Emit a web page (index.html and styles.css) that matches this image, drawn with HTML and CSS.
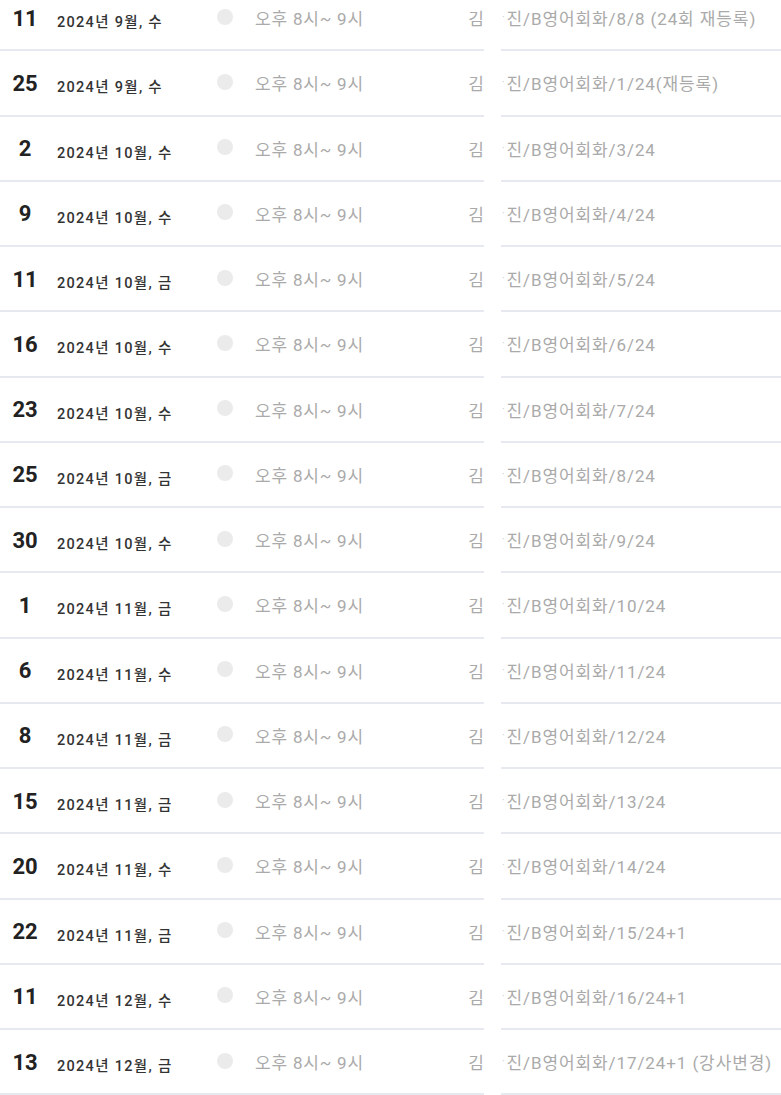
FILE: index.html
```html
<!DOCTYPE html>
<html lang="ko">
<head>
<meta charset="utf-8">
<link rel="stylesheet" href="styles.css">
</head>
<body>
<ul class="list">
  <li class="row"><div class="left"><span class="day">11</span><span class="date">2024년 9월, 수</span><span class="dot"></span><span class="time">오후 8시~ 9시</span><span class="name">김</span></div><div class="right"><span class="mid">·</span>진/B영어회화/8/8 (24회 재등록)</div></li>
  <li class="row"><div class="left"><span class="day">25</span><span class="date">2024년 9월, 수</span><span class="dot"></span><span class="time">오후 8시~ 9시</span><span class="name">김</span></div><div class="right"><span class="mid">·</span>진/B영어회화/1/24(재등록)</div></li>
  <li class="row"><div class="left"><span class="day">2</span><span class="date">2024년 10월, 수</span><span class="dot"></span><span class="time">오후 8시~ 9시</span><span class="name">김</span></div><div class="right"><span class="mid">·</span>진/B영어회화/3/24</div></li>
  <li class="row"><div class="left"><span class="day">9</span><span class="date">2024년 10월, 수</span><span class="dot"></span><span class="time">오후 8시~ 9시</span><span class="name">김</span></div><div class="right"><span class="mid">·</span>진/B영어회화/4/24</div></li>
  <li class="row"><div class="left"><span class="day">11</span><span class="date">2024년 10월, 금</span><span class="dot"></span><span class="time">오후 8시~ 9시</span><span class="name">김</span></div><div class="right"><span class="mid">·</span>진/B영어회화/5/24</div></li>
  <li class="row"><div class="left"><span class="day">16</span><span class="date">2024년 10월, 수</span><span class="dot"></span><span class="time">오후 8시~ 9시</span><span class="name">김</span></div><div class="right"><span class="mid">·</span>진/B영어회화/6/24</div></li>
  <li class="row"><div class="left"><span class="day">23</span><span class="date">2024년 10월, 수</span><span class="dot"></span><span class="time">오후 8시~ 9시</span><span class="name">김</span></div><div class="right"><span class="mid">·</span>진/B영어회화/7/24</div></li>
  <li class="row"><div class="left"><span class="day">25</span><span class="date">2024년 10월, 금</span><span class="dot"></span><span class="time">오후 8시~ 9시</span><span class="name">김</span></div><div class="right"><span class="mid">·</span>진/B영어회화/8/24</div></li>
  <li class="row"><div class="left"><span class="day">30</span><span class="date">2024년 10월, 수</span><span class="dot"></span><span class="time">오후 8시~ 9시</span><span class="name">김</span></div><div class="right"><span class="mid">·</span>진/B영어회화/9/24</div></li>
  <li class="row"><div class="left"><span class="day">1</span><span class="date">2024년 11월, 금</span><span class="dot"></span><span class="time">오후 8시~ 9시</span><span class="name">김</span></div><div class="right"><span class="mid">·</span>진/B영어회화/10/24</div></li>
  <li class="row"><div class="left"><span class="day">6</span><span class="date">2024년 11월, 수</span><span class="dot"></span><span class="time">오후 8시~ 9시</span><span class="name">김</span></div><div class="right"><span class="mid">·</span>진/B영어회화/11/24</div></li>
  <li class="row"><div class="left"><span class="day">8</span><span class="date">2024년 11월, 금</span><span class="dot"></span><span class="time">오후 8시~ 9시</span><span class="name">김</span></div><div class="right"><span class="mid">·</span>진/B영어회화/12/24</div></li>
  <li class="row"><div class="left"><span class="day">15</span><span class="date">2024년 11월, 금</span><span class="dot"></span><span class="time">오후 8시~ 9시</span><span class="name">김</span></div><div class="right"><span class="mid">·</span>진/B영어회화/13/24</div></li>
  <li class="row"><div class="left"><span class="day">20</span><span class="date">2024년 11월, 수</span><span class="dot"></span><span class="time">오후 8시~ 9시</span><span class="name">김</span></div><div class="right"><span class="mid">·</span>진/B영어회화/14/24</div></li>
  <li class="row"><div class="left"><span class="day">22</span><span class="date">2024년 11월, 금</span><span class="dot"></span><span class="time">오후 8시~ 9시</span><span class="name">김</span></div><div class="right"><span class="mid">·</span>진/B영어회화/15/24+1</div></li>
  <li class="row"><div class="left"><span class="day">11</span><span class="date">2024년 12월, 수</span><span class="dot"></span><span class="time">오후 8시~ 9시</span><span class="name">김</span></div><div class="right"><span class="mid">·</span>진/B영어회화/16/24+1</div></li>
  <li class="row"><div class="left"><span class="day">13</span><span class="date">2024년 12월, 금</span><span class="dot"></span><span class="time">오후 8시~ 9시</span><span class="name">김</span></div><div class="right"><span class="mid">·</span>진/B영어회화/17/24+1 (강사변경)</div></li>
</ul>
</body>
</html>
```
FILE: styles.css
```css
html, body {
  margin: 0;
  padding: 0;
  background: #ffffff;
  overflow: hidden;
}
body {
  font-family: Roboto, "Noto Sans CJK KR", sans-serif;
}
.list {
  list-style: none;
  margin: -14px 0 0 0;
  padding: 0;
}
.row {
  display: flex;
  gap: 17px;
  height: 65.25px;
}
.left {
  width: 484px;
  flex: none;
  display: grid;
  grid-template-columns: 50px 167px 38px 1fr auto;
  align-items: center;
  border-bottom: 2px solid #e6eaf0;
  box-sizing: border-box;
}
.right {
  flex: 1;
  display: flex;
  align-items: center;
  border-bottom: 2px solid #e6eaf0;
  box-sizing: border-box;
  padding-left: 1px;
  font-size: 17px;
  color: #aaaaaa;
  white-space: nowrap;
  letter-spacing: 0.9px;
}
.mid {
  color: #c8c8c8;
  font-size: 10px;
  margin-right: 1px;
}
.day {
  text-align: center;
  font-size: 22px;
  font-weight: 700;
  color: #222222;
  padding-top: 1px;
}
.date {
  padding-left: 7px;
  padding-top: 6px;
  font-size: 14.5px;
  font-weight: 500;
  color: #333333;
  letter-spacing: 1.3px;
}
.dot {
  width: 16px;
  height: 16px;
  border-radius: 50%;
  background: #ebebeb;
  margin-top: -2px;
}
.time {
  font-size: 17px;
  color: #aaaaaa;
  letter-spacing: 0.8px;
}
.name {
  font-size: 17px;
  color: #aaaaaa;
}
```
